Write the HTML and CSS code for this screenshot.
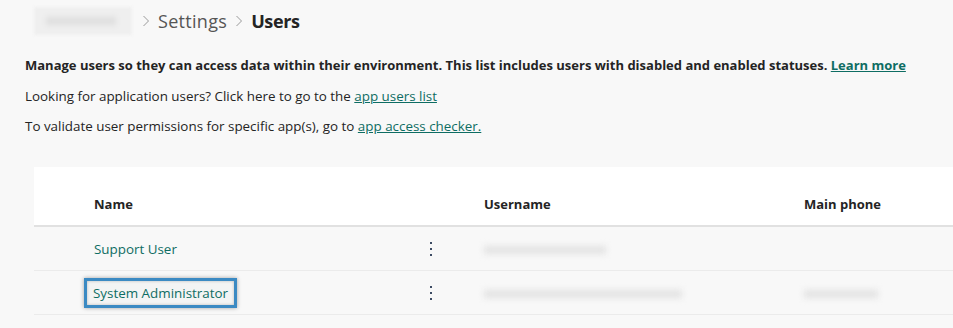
FILE: index.html
```html
<!DOCTYPE html>
<html lang="en">
<head>
  <meta charset="UTF-8" />
  <title>Settings | Users</title>
  <link rel="stylesheet" href="styles.css">
</head>
<body>
  <div class="crumbs">
    <span class="env-name"><span class="env-text"></span></span>
    <svg class="chev" width="8" height="12" viewBox="0 0 8 12"><path d="M1.5 1 L6.5 6 L1.5 11" fill="none" stroke="#9a9a9a" stroke-width="1"/></svg>
    <span class="crumb">Settings</span>
    <svg class="chev" width="8" height="12" viewBox="0 0 8 12"><path d="M1.5 1 L6.5 6 L1.5 11" fill="none" stroke="#9a9a9a" stroke-width="1"/></svg>
    <span class="crumb current">Users</span>
  </div>

  <div class="intro">
    <p class="lead">Manage users so they can access data within their environment. This list includes users with disabled and enabled statuses. <a href="#">Learn more</a></p>
    <p>Looking for application users? Click here to go to the <a href="#">app users list</a></p>
    <p>To validate user permissions for specific app(s), go to <a href="#">app access checker.</a></p>
  </div>

  <div class="grid">
    <div class="row head">
      <div></div>
      <div class="cell name">Name</div>
      <div class="cell">Username</div>
      <div class="cell">Main phone</div>
    </div>
    <div class="row">
      <div></div>
      <div class="cell name">
        <a href="#" class="user">Support User</a>
        <span class="kebab"><i></i><i></i><i></i></span>
      </div>
      <div class="cell"><span class="blurred" style="width:122px"></span></div>
      <div class="cell"></div>
    </div>
    <div class="row">
      <div></div>
      <div class="cell name">
        <a href="#" class="user focused">System Administrator</a>
        <span class="kebab"><i></i><i></i><i></i></span>
      </div>
      <div class="cell"><span class="blurred" style="width:198px"></span></div>
      <div class="cell"><span class="blurred" style="width:74px"></span></div>
    </div>
  </div>
</body>
</html>
```

FILE: styles.css
```css
body {
  margin: 0;
  background-color: #f8f8f8;
  color: #242424;
  font-family: "Open Sans", "Noto Sans", Arial, sans-serif;
  font-size: 13.4px;
}
a {
  color: #0e6d63;
  text-decoration: underline;
}
.crumbs {
  display: flex;
  align-items: center;
  height: 42px;
  padding-left: 34px;
}
.env-name {
  display: inline-block;
  width: 98px;
  height: 28px;
  background-color: #efefef;
  filter: blur(1.5px);
  position: relative;
  margin-right: 2px;
}
.env-text {
  position: absolute;
  left: 12px;
  top: 10px;
  width: 70px;
  height: 8px;
  background-color: #dedede;
  filter: blur(2.5px);
}
.chev {
  margin: 0 8px;
}
.crumb {
  font-size: 18px;
  color: #555;
  letter-spacing: 0.3px;
}
.crumb.current {
  color: #242424;
  font-weight: bold;
  letter-spacing: -0.4px;
}
.intro {
  padding: 14px 25px 0;
}
.intro p {
  margin: 0 0 12px;
  line-height: 18px;
}
.intro .lead {
  font-weight: bold;
  font-size: 13px;
  margin-bottom: 13px;
}
.grid {
  margin: 32px 0 0 34px;
}
.row {
  display: grid;
  grid-template-columns: 60px 376px 320px 1fr;
  height: 43px;
  align-items: center;
  border-bottom: 1px solid #ebebeb;
}
.row.head {
  height: 58px;
  background-color: #fff;
  border-bottom: 2px solid #e1e1e1;
  font-weight: bold;
  font-size: 13px;
  align-items: end;
}
.row.head .cell {
  padding-bottom: 12px;
}
.cell {
  padding-left: 14px;
}
.cell.name {
  padding-left: 0;
  display: flex;
  align-items: center;
  justify-content: space-between;
  padding-right: 38px;
}
.user {
  text-decoration: none;
  color: #0e6d63;
}
.user.focused {
  margin-left: -10px;
  padding: 3px 6px;
  border: 3px solid #3b8ac3;
  background-color: #f3f4f4;
  box-shadow: 0 0 4px rgba(0, 0, 0, 0.35), inset 0 0 3px rgba(0, 0, 0, 0.25);
}
.kebab {
  display: flex;
  flex-direction: column;
  gap: 4px;
}
.kebab i {
  display: block;
  width: 2px;
  height: 2px;
  background-color: #3c4b63;
}
.blurred {
  display: inline-block;
  height: 8px;
  background-color: #e2e2e2;
  filter: blur(3px);
  vertical-align: middle;
}
```
